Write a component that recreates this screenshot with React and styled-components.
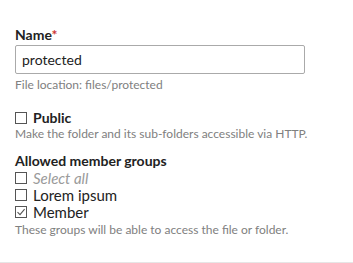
import React from "react";
import styled, { createGlobalStyle } from "styled-components";

const Global = createGlobalStyle`
    body {
        margin: 0;
        font-family: Lato, "Liberation Sans", sans-serif;
        background: #fff;
        color: #222;
    }
`;

const Panel = styled.div`
    width: 353px;
    height: 263px;
    box-sizing: border-box;
    padding: 26px 15px 0;
    border-bottom: 1px solid #e6e6e6;
`;

const Field = styled.div`
    margin-bottom: ${(p) => p.gap || 0}px;
`;

const Label = styled.label`
    display: block;
    font-size: 14px;
    font-weight: 700;
    line-height: ${(p) => p.lh || 17}px;
    margin-bottom: ${(p) => p.below || 0}px;
`;

const Required = styled.span`
    color: #c33;
`;

const Input = styled.input`
    display: block;
    width: 290px;
    height: 29px;
    box-sizing: border-box;
    border: 1px solid #aaa;
    border-radius: 2px;
    padding: 0 6px;
    font-family: inherit;
    font-size: 14px;
    color: #222;
`;

const Help = styled.div`
    font-size: 12px;
    color: #808080;
    line-height: 15px;
    margin-top: ${(p) => p.top || 0}px;
`;

const Row = styled.label`
    display: flex;
    align-items: center;
    gap: 6px;
    height: 17px;
    font-size: ${(p) => (p.bold ? 14 : 15)}px;
    font-weight: ${(p) => (p.bold ? 700 : 400)};
    font-style: ${(p) => (p.muted ? "italic" : "normal")};
    color: ${(p) => (p.muted ? "#9a9a9a" : "#222")};
`;

const Box = styled.span`
    width: 10px;
    height: 10px;
    border: 1px solid #555;
    display: flex;
    align-items: center;
    justify-content: center;
    flex-shrink: 0;
`;

function Check({ checked }) {
    return (
        <Box>
            {checked && (
                <svg width="10" height="10" viewBox="0 0 10 10">
                    <path d="M1.5 5.2 L4 7.6 L8.6 2.2" fill="none" stroke="#555" strokeWidth="1.1" />
                </svg>
            )}
        </Box>
    );
}

export default function App() {
    return (
        <>
            <Global />
            <Panel>
                <Field gap={17}>
                    <Label below={2}>
                        Name<Required>*</Required>
                    </Label>
                    <Input defaultValue="protected" />
                    <Help top={3}>File location: files/protected</Help>
                </Field>
                <Field gap={12}>
                    <Row bold>
                        <Check />
                        Public
                    </Row>
                    <Help>Make the folder and its sub-folders accessible via HTTP.</Help>
                </Field>
                <Field>
                    <Label lh={16}>Allowed member groups</Label>
                    <Row muted>
                        <Check />
                        Select all
                    </Row>
                    <Row>
                        <Check />
                        Lorem ipsum
                    </Row>
                    <Row>
                        <Check checked />
                        Member
                    </Row>
                    <Help top={2}>These groups will be able to access the file or folder.</Help>
                </Field>
            </Panel>
        </>
    );
}
